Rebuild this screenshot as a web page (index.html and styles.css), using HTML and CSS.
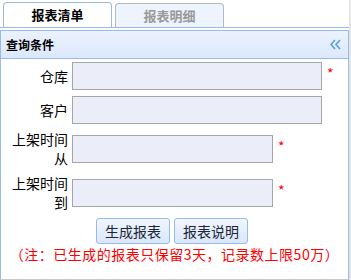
FILE: index.html
```html
<!DOCTYPE html>
<html lang="zh-CN">
<head>
    <meta charset="UTF-8">
    <meta name="viewport" content="width=device-width, initial-scale=1.0">
    <title>报表清单</title>
    <link rel="stylesheet" href="styles.css">
</head>
<body>
    <div class="page">
        <div class="tabs">
            <div class="tab active">报表清单</div>
            <div class="tab">报表明细</div>
        </div>

        <div class="panel">
            <div class="panel-header">
                <span class="panel-title">查询条件</span>
                <svg class="collapse" width="11" height="11" viewBox="0 0 11 11">
                    <path d="M5 1 L1 5.5 L5 10 M10 1 L6 5.5 L10 10" fill="none" stroke="#5d9ee0" stroke-width="1.6"/>
                </svg>
            </div>
            <div class="panel-body">
                <div class="form-row">
                    <label class="form-label">仓库</label>
                    <input class="field wide" type="text">
                    <span class="required">*</span>
                </div>
                <div class="form-row">
                    <label class="form-label">客户</label>
                    <input class="field wide" type="text">
                </div>
                <div class="form-row tall">
                    <label class="form-label">上架时间<br>从</label>
                    <input class="field narrow" type="text">
                    <span class="required">*</span>
                </div>
                <div class="form-row tall">
                    <label class="form-label">上架时间<br>到</label>
                    <input class="field narrow" type="text">
                    <span class="required">*</span>
                </div>
                <div class="actions">
                    <button type="button">生成报表</button>
                    <button type="button">报表说明</button>
                </div>
                <p class="note">（注：已生成的报表只保留3天，记录数上限50万）</p>
            </div>
        </div>
    </div>
</body>
</html>
```

FILE: styles.css
```css
body {
    margin: 0;
    font-family: "Noto Sans CJK SC", "Noto Sans", sans-serif;
    font-size: 14px;
    color: #000;
    background: #fff;
}
.page {
    width: 349px;
    height: 280px;
    border-right: 2px solid #e4e4e4;
}
.tabs {
    display: flex;
    gap: 3px;
    height: 25px;
    padding: 2px 0 0 3px;
    border-bottom: 1px solid #99bbe8;
}
.tab {
    width: 107px;
    margin-top: 1px;
    border: 1px solid #b8b8b8;
    border-bottom: none;
    border-radius: 4px 4px 0 0;
    background: #edf4fd;
    color: #999;
    font-size: 13px;
    font-weight: bold;
    line-height: 24px;
    text-align: center;
}
.tab.active {
    margin-top: 0;
    border-color: #99bbe8;
    background: #fff;
    color: #000;
}
.panel {
    margin-top: 2px;
    border: 1px solid #99bbe8;
    border-bottom-color: #c8c8c8;
}
.panel-header {
    display: flex;
    align-items: center;
    justify-content: space-between;
    height: 27px;
    padding: 0 7px 0 5px;
    border-bottom: 1px solid #99bbe8;
    background: linear-gradient(#ebf2fd, #dce8fb);
}
.panel-title {
    font-size: 12px;
    font-weight: bold;
}
.panel-body {
    padding: 3px 0 2px;
    height: 215px;
}
.form-row {
    display: flex;
    align-items: center;
    height: 28px;
    margin-bottom: 6px;
}
.form-row.tall {
    height: 38px;
}
.form-label {
    width: 67px;
    margin-right: 4px;
    text-align: right;
    line-height: 19px;
}
.field {
    box-sizing: border-box;
    height: 28px;
    margin: 0;
    border: 1px solid #a6a6aa;
    background: #ebeef8;
    font: inherit;
}
.field.wide {
    width: 250px;
}
.field.narrow {
    width: 201px;
}
.required {
    align-self: flex-start;
    margin: 4px 0 0 5px;
    color: #f00;
    line-height: 14px;
}
.form-row.tall .required {
    margin-top: 9px;
}
.actions {
    display: flex;
    gap: 4px;
    padding-left: 95px;
    margin-top: 6px;
}
button {
    height: 26px;
    padding: 0 8px;
    border: 1px solid #99bbe8;
    border-radius: 3px;
    background: linear-gradient(#f1f6fe, #d9e6fa);
    color: #1c2533;
    font-family: inherit;
    font-size: 14px;
    line-height: 22px;
}
.note {
    margin: 1px 0 0;
    color: #f00;
    font-size: 14px;
    line-height: 18px;
    letter-spacing: 0.5px;
    text-align: center;
}
```
